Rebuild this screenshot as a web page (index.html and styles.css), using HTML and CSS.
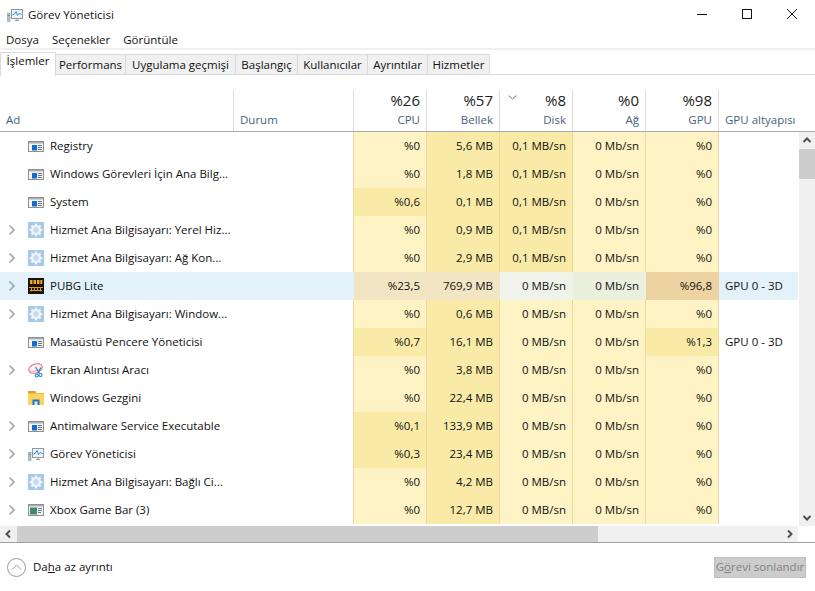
FILE: index.html
```html
<!DOCTYPE html>
<html lang="tr">
<head>
<meta charset="utf-8">
<title>Görev Yöneticisi</title>
<link rel="stylesheet" href="styles.css">
</head>
<body>
<svg class="defs" width="0" height="0" aria-hidden="true">
  <symbol id="i-win" viewBox="0 0 16 16"><rect x=".5" y="3.500" width="15" height="10" fill="#f6f6f6" stroke="#8f8f8f"/><rect x="1" y="4" width="14" height="1.500" fill="#a9b0ba"/><rect x="4" y="7" width="5" height="5.500" fill="#0f6fd0"/><path d="M10 7.500h4M10 9.500h4M10 11.500h4" stroke="#66758a"/></symbol>
  <symbol id="i-gear" viewBox="0 0 16 16"><rect width="16" height="16" fill="#a9c9ea"/><circle cx="8" cy="8" r="4" fill="#c5dcf2" stroke="#f2f6fb" stroke-width="2.200"/><path d="M8 1.600v2.400M8 12v2.400M1.600 8H4M12 8h2.400M3.500 3.500l1.700 1.700M10.800 10.800l1.700 1.700M12.500 3.500l-1.700 1.700M5.200 10.800l-1.700 1.700" stroke="#f2f6fb" stroke-width="2"/></symbol>
  <symbol id="i-tm" viewBox="0 0 16 16"><rect x="4.500" y="2.500" width="11" height="9" fill="#eef4fa" stroke="#8b98a5"/><path d="M5.500 8l2-1 1.500-2.500 1.500 4 1.500-2 2.500 1" fill="none" stroke="#2f93d6"/><path d="M8 13.500h4M10 11.500v2" stroke="#8b98a5"/><rect x=".5" y="6.500" width="2.500" height="8" fill="#b8bec4" stroke="#8b98a5" stroke-width=".6"/><rect x="1" y="8" width="1.500" height="1" fill="#3ca64a"/></symbol>
  <symbol id="i-chev" viewBox="0 0 8 12"><path d="M1.500 1.500 6 6l-4.500 4.500" fill="none" stroke="#a6a6a6" stroke-width="1.700"/></symbol>
</svg>

<header class="titlebar">
  <svg class="ico" width="16" height="16"><use href="#i-tm"/></svg>
  <span class="title">Görev Yöneticisi</span>
  <div class="winbtns">
    <svg width="12" height="12" viewBox="0 0 12 12"><path d="M1 6.500h10" stroke="#111"/></svg>
    <svg width="12" height="12" viewBox="0 0 12 12"><rect x="1.500" y="1.500" width="9" height="9" fill="none" stroke="#111"/></svg>
    <svg width="12" height="12" viewBox="0 0 12 12"><path d="M1 1l10 10M11 1 1 11" stroke="#111" fill="none"/></svg>
  </div>
</header>

<nav class="menu"><span>Dosya</span><span>Seçenekler</span><span>Görüntüle</span></nav>

<div class="tabs">
  <span class="tab active">İşlemler</span>
  <span class="tab">Performans</span>
  <span class="tab">Uygulama geçmişi</span>
  <span class="tab">Başlangıç</span>
  <span class="tab">Kullanıcılar</span>
  <span class="tab">Ayrıntılar</span>
  <span class="tab">Hizmetler</span>
</div>

<main class="content">
  <div class="table">
    <div class="head">
      <div class="hc name"><b></b><i>Ad</i></div>
      <div class="hc status"><b></b><i>Durum</i></div>
      <div class="hc num"><b>%26</b><i>CPU</i></div>
      <div class="hc num"><b>%57</b><i>Bellek</i></div>
      <div class="hc num sorted"><svg class="sort" width="9" height="5" viewBox="0 0 9 5"><path d="M.5.500l4 3.500 4-3.500" fill="none" stroke="#6d7a8d"/></svg><b>%8</b><i>Disk</i></div>
      <div class="hc num"><b>%0</b><i>Ağ</i></div>
      <div class="hc num"><b>%98</b><i>GPU</i></div>
      <div class="hc engine"><b></b><i>GPU altyapısı</i></div>
    </div>

    <div class="row"><div class="n"><span class="exp"></span><svg class="ico" width="16" height="16"><use href="#i-win"/></svg><span>Registry</span></div><div></div><div class="c l">%0</div><div class="c m">5,6 MB</div><div class="c m">0,1 MB/sn</div><div class="c l">0 Mb/sn</div><div class="c l">%0</div><div></div></div>
    <div class="row"><div class="n"><span class="exp"></span><svg class="ico" width="16" height="16"><use href="#i-win"/></svg><span>Windows Görevleri İçin Ana Bilg...</span></div><div></div><div class="c l">%0</div><div class="c m">1,8 MB</div><div class="c m">0,1 MB/sn</div><div class="c l">0 Mb/sn</div><div class="c l">%0</div><div></div></div>
    <div class="row"><div class="n"><span class="exp"></span><svg class="ico" width="16" height="16"><use href="#i-win"/></svg><span>System</span></div><div></div><div class="c m">%0,6</div><div class="c m">0,1 MB</div><div class="c m">0,1 MB/sn</div><div class="c l">0 Mb/sn</div><div class="c l">%0</div><div></div></div>
    <div class="row"><div class="n"><svg class="exp" width="8" height="12"><use href="#i-chev"/></svg><svg class="ico" width="16" height="16"><use href="#i-gear"/></svg><span>Hizmet Ana Bilgisayarı: Yerel Hiz...</span></div><div></div><div class="c l">%0</div><div class="c m">0,9 MB</div><div class="c m">0,1 MB/sn</div><div class="c l">0 Mb/sn</div><div class="c l">%0</div><div></div></div>
    <div class="row"><div class="n"><svg class="exp" width="8" height="12"><use href="#i-chev"/></svg><svg class="ico" width="16" height="16"><use href="#i-gear"/></svg><span>Hizmet Ana Bilgisayarı: Ağ Kon...</span></div><div></div><div class="c l">%0</div><div class="c m">2,9 MB</div><div class="c m">0,1 MB/sn</div><div class="c l">0 Mb/sn</div><div class="c l">%0</div><div></div></div>
    <div class="row sel"><div class="n"><svg class="exp" width="8" height="12"><use href="#i-chev"/></svg><svg class="ico" width="16" height="16" viewBox="0 0 16 16"><rect width="16" height="16" fill="#15120c"/><path d="M2 2h2.500v4H2zM5.500 2H8v4H5.500zM9 2h2.500v4H9zM12.300 2h2v4h-2z" fill="#f2a81d"/><path d="M1 9.500h14M3.500 9.500v4M6.500 9.500v3M9.500 9.500v3M12.500 9.500v4M2 12.500h12" fill="none" stroke="#e8951a"/></svg><span>PUBG Lite</span></div><div></div><div class="c s1">%23,5</div><div class="c s1">769,9 MB</div><div class="c s2">0 MB/sn</div><div class="c s3">0 Mb/sn</div><div class="c s4">%96,8</div><div class="e">GPU 0 - 3D</div></div>
    <div class="row"><div class="n"><svg class="exp" width="8" height="12"><use href="#i-chev"/></svg><svg class="ico" width="16" height="16"><use href="#i-gear"/></svg><span>Hizmet Ana Bilgisayarı: Window...</span></div><div></div><div class="c l">%0</div><div class="c m">0,6 MB</div><div class="c l">0 MB/sn</div><div class="c l">0 Mb/sn</div><div class="c l">%0</div><div></div></div>
    <div class="row"><div class="n"><span class="exp"></span><svg class="ico" width="16" height="16"><use href="#i-win"/></svg><span>Masaüstü Pencere Yöneticisi</span></div><div></div><div class="c m">%0,7</div><div class="c m">16,1 MB</div><div class="c l">0 MB/sn</div><div class="c l">0 Mb/sn</div><div class="c m">%1,3</div><div class="e">GPU 0 - 3D</div></div>
    <div class="row"><div class="n"><svg class="exp" width="8" height="12"><use href="#i-chev"/></svg><svg class="ico" width="16" height="16" viewBox="0 0 16 16"><ellipse cx="7.500" cy="6.500" rx="7" ry="4.500" transform="rotate(-20 7.500 6.500)" fill="#fdf3f4" stroke="#dd6f78"/><path d="M1.500 8.500c3 1.500 6 1 9-1" fill="none" stroke="#e9a3a8"/><path d="M7.500 5l4 6.500M13 5.500l-3.500 6" stroke="#2a7fd0" stroke-width="1.200"/><circle cx="8.800" cy="13.500" r="1.500" fill="#fff" stroke="#2a7fd0" stroke-width="1.100"/><circle cx="12.500" cy="13" r="1.500" fill="#fff" stroke="#2a7fd0" stroke-width="1.100"/></svg><span>Ekran Alıntısı Aracı</span></div><div></div><div class="c l">%0</div><div class="c m">3,8 MB</div><div class="c l">0 MB/sn</div><div class="c l">0 Mb/sn</div><div class="c l">%0</div><div></div></div>
    <div class="row"><div class="n"><span class="exp"></span><svg class="ico" width="16" height="16" viewBox="0 0 16 16"><path d="M0 1h7l1.500 2H16v12H0z" fill="#fbd35f"/><path d="M0 1h7l1.500 2H0z" fill="#dca12a"/><path d="M0 3h16v1H0z" fill="#eebb45"/><rect x="4.500" y="9.500" width="7" height="5.500" fill="#1e77c4"/><rect x="6.500" y="11.500" width="3" height="3.500" fill="#dcecf8"/></svg><span>Windows Gezgini</span></div><div></div><div class="c l">%0</div><div class="c m">22,4 MB</div><div class="c l">0 MB/sn</div><div class="c l">0 Mb/sn</div><div class="c l">%0</div><div></div></div>
    <div class="row"><div class="n"><svg class="exp" width="8" height="12"><use href="#i-chev"/></svg><svg class="ico" width="16" height="16"><use href="#i-win"/></svg><span>Antimalware Service Executable</span></div><div></div><div class="c m">%0,1</div><div class="c m">133,9 MB</div><div class="c l">0 MB/sn</div><div class="c l">0 Mb/sn</div><div class="c l">%0</div><div></div></div>
    <div class="row"><div class="n"><svg class="exp" width="8" height="12"><use href="#i-chev"/></svg><svg class="ico" width="16" height="16"><use href="#i-tm"/></svg><span>Görev Yöneticisi</span></div><div></div><div class="c m">%0,3</div><div class="c m">23,4 MB</div><div class="c l">0 MB/sn</div><div class="c l">0 Mb/sn</div><div class="c l">%0</div><div></div></div>
    <div class="row"><div class="n"><svg class="exp" width="8" height="12"><use href="#i-chev"/></svg><svg class="ico" width="16" height="16"><use href="#i-gear"/></svg><span>Hizmet Ana Bilgisayarı: Bağlı Ci...</span></div><div></div><div class="c l">%0</div><div class="c m">4,2 MB</div><div class="c l">0 MB/sn</div><div class="c l">0 Mb/sn</div><div class="c l">%0</div><div></div></div>
    <div class="row"><div class="n"><svg class="exp" width="8" height="12"><use href="#i-chev"/></svg><svg class="ico" width="16" height="16" viewBox="0 0 16 16"><rect x=".5" y="2.500" width="15" height="11" fill="#f6f6f6" stroke="#8f8f8f"/><rect x="1" y="3" width="14" height="1.500" fill="#a9b0ba"/><rect x="2" y="5.500" width="7" height="7" fill="#3d8a6c"/><path d="M10 6.500h4M10 8.500h4M10 10.500h3" stroke="#66758a"/></svg><span>Xbox Game Bar (3)</span></div><div></div><div class="c l">%0</div><div class="c m">12,7 MB</div><div class="c l">0 MB/sn</div><div class="c l">0 Mb/sn</div><div class="c l">%0</div><div></div></div>
  </div>
  <div class="vscroll">
    <svg width="16" height="17" viewBox="0 0 16 17"><path d="M4.500 10 8 6.500l3.500 3.500" fill="none" stroke="#505050" stroke-width="2"/></svg>
    <div class="vthumb"></div>
    <div class="grow"></div>
    <svg width="16" height="17" viewBox="0 0 16 17"><path d="M4.500 7 8 10.500 11.500 7" fill="none" stroke="#505050" stroke-width="2"/></svg>
  </div>
</main>

<div class="hscroll">
  <svg width="17" height="16" viewBox="0 0 17 16"><path d="M10 4.500 6.500 8l3.500 3.500" fill="none" stroke="#505050" stroke-width="2"/></svg>
  <div class="hthumb"></div>
  <svg width="17" height="16" viewBox="0 0 17 16"><path d="M7 4.500 10.500 8 7 11.500" fill="none" stroke="#505050" stroke-width="2"/></svg>
</div>

<footer class="footer">
  <svg width="19" height="19" viewBox="0 0 19 19"><circle cx="9.500" cy="9.500" r="9" fill="none" stroke="#9a9a9a"/><path d="M5 11.500l4.500-4.500 4.500 4.500" fill="none" stroke="#9a9a9a"/></svg>
  <span class="less">Da<u>h</u>a az ayrıntı</span>
  <button class="end" type="button" disabled>G<u>ö</u>revi sonlandır</button>
</footer>
</body>
</html>
```

FILE: styles.css
```css
* { box-sizing: border-box; }
html, body { margin: 0; height: 100%; }
body {
  width: 815px; height: 591px; overflow: hidden; background: #fff; color: #111;
  font: 11.5px/16px "Open Sans", "Noto Sans", sans-serif;
  display: flex; flex-direction: column;
}
.defs { position: absolute; }
.ico { flex: none; display: block; }

.titlebar { height: 28px; flex: none; display: flex; align-items: center; padding: 2px 0 0 7px; }
.title { margin-left: 5px; }
.winbtns { margin: -2px 0 0 auto; display: flex; gap: 33px; padding-right: 17px; }

.menu { height: 22px; flex: none; display: flex; gap: 13px; padding: 3px 0 0 6px; align-items: center; border-bottom: 2px solid #f0f0f0; }

.tabs { height: 25px; flex: none; display: grid; grid-template-columns: 56px 70px 110px 62px 70px 60px 62px; justify-content: start; padding: 4px 0 0; border-bottom: 1px solid #d9d9d9; }
.tab { height: 21px; padding-top: 2px; text-align: center; background: #f0f0f0; border: 1px solid #d9d9d9; border-left: 0; line-height: 16px; white-space: nowrap; }
.tab.active { background: #fff; height: 24px; margin-top: -2px; border-left: 1px solid #d9d9d9; border-bottom: 0; padding-top: 0; }

.content { flex: 1; min-height: 0; display: flex; overflow: hidden; }
.table { flex: none; width: 798px; overflow: hidden; }
.head, .row { display: grid; grid-template-columns: 234px 120px 73px 73px 73px 73px 73px 79px; }
.head { height: 57px; padding-top: 15px; border-bottom: 1px solid #a8a8a8; }
.hc { display: flex; flex-direction: column; align-items: flex-end; justify-content: space-between; padding: 0 6px 3px 6px; border-right: 1px solid #dcdcdc; color: #4c607a; position: relative; white-space: nowrap; }
.hc b { font-weight: 400; font-size: 15px; line-height: 20px; color: #222; height: 20px; }
.hc i { font-style: normal; line-height: 16px; }
.name, .status, .engine { align-items: flex-start; }
.engine { border-right: 0; }
.sort { position: absolute; left: 8px; top: 5px; }

.row { height: 28px; line-height: 28px; }
.row > div { white-space: nowrap; overflow: hidden; }
.row > div:nth-child(2) { border-right: 1px solid #ecd9a0; }
.sel > div:nth-child(2) { border-right-color: #e3f1fb; }
.n { display: flex; align-items: center; padding-left: 8px; }
.exp { display: block; width: 8px; height: 12px; flex: none; margin-right: 12px; }
.n span:last-child { margin-left: 6px; }
.c { text-align: right; padding-right: 6px; border-right: 1px solid #ecd9a0; }
.l { background: #fdf3c5; }
.m { background: #f9eba7; }
.e { padding-left: 6px; }
.sel { background: #e3f1fb; }
.s1 { background: #f1e5c3; border-right-color: #f1e5c3; }
.s2 { background: #f0f3e9; border-right-color: #f0f3e9; }
.s3 { background: #ebefde; border-right-color: #ebefde; }
.s4 { background: #edd3a2; border-right-color: #edd3a2; }

.vscroll { width: 17px; flex: none; display: flex; flex-direction: column; margin-top: 56px; border-top: 1px solid #a8a8a8; }
.vscroll > * { margin-left: 1px; background: #f0f0f0; }
.vscroll svg { display: block; flex: none; }
.vscroll .vthumb { height: 30px; background: #cdcdcd; flex: none; }
.grow { flex: 1; }

.hscroll { height: 16px; flex: none; display: flex; background: #f0f0f0; width: 798px; }
.hscroll svg { display: block; flex: none; }
.hthumb { flex: 1; background: #cdcdcd; margin-right: 183px; }

.footer { height: 49px; flex: none; display: flex; align-items: center; padding: 0 9px 0 7px; border-top: 1px solid #a0a0a0; }
.less { margin-left: 7px; }
.end { margin-left: auto; width: 92px; height: 21px; padding: 0; font: inherit; color: #838383; background: #ccc; border: 1px solid #bfbfbf; white-space: nowrap; }
```
